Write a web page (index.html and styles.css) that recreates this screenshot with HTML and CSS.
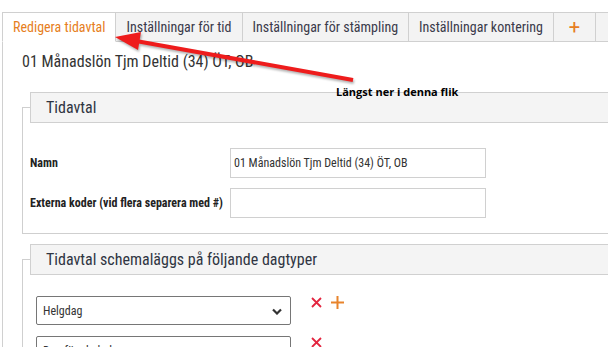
FILE: index.html
```html
<!DOCTYPE html>
<html lang="sv">
<head>
    <meta charset="UTF-8">
    <title>Redigera tidavtal</title>
    <link rel="stylesheet" href="styles.css">
</head>
<body>
    <div class="page">
        <!-- Tab bar -->
        <ul class="tabs">
            <li class="tab active">Redigera tidavtal</li>
            <li class="tab">Inställningar för tid</li>
            <li class="tab">Inställningar för stämpling</li>
            <li class="tab">Inställningar kontering</li>
            <li class="tab tab-add">+</li>
            <li class="tab tab-fill"></li>
        </ul>

        <div class="panel">
            <h1 class="title">01 Månadslön Tjm Deltid (34) ÖT, OB</h1>

            <div class="section">
                <div class="legend">Tidavtal</div>
                <div class="form-row">
                    <label for="name">Namn</label>
                    <input type="text" id="name" value="01 Månadslön Tjm Deltid (34) ÖT, OB">
                </div>
                <div class="form-row">
                    <label for="codes">Externa koder (vid flera separera med #)</label>
                    <input type="text" id="codes">
                </div>
            </div>

            <div class="section">
                <div class="legend">Tidavtal schemaläggs på följande dagtyper</div>
                <div class="day-list">
                    <div class="day-row">
                        <div class="select-wrap">
                            <select>
                                <option>Helgdag</option>
                            </select>
                            <svg class="chevron" width="10" height="7" viewBox="0 0 10 7"><path d="M1 1.5 L5 5.5 L9 1.5" fill="none" stroke="#333" stroke-width="2.2"/></svg>
                        </div>
                        <button class="icon-btn remove"><svg width="11" height="11" viewBox="0 0 11 11"><path d="M1 1 L10 10 M10 1 L1 10" stroke="#e3253f" stroke-width="1.8"/></svg></button>
                        <button class="icon-btn add"><svg width="13" height="13" viewBox="0 0 13 13"><path d="M6.5 0 V13 M0 6.5 H13" stroke="#e8842c" stroke-width="2"/></svg></button>
                    </div>
                    <div class="day-row">
                        <div class="select-wrap">
                            <select>
                                <option>Dag före helgdag</option>
                            </select>
                            <svg class="chevron" width="10" height="7" viewBox="0 0 10 7"><path d="M1 1.5 L5 5.5 L9 1.5" fill="none" stroke="#333" stroke-width="2.2"/></svg>
                        </div>
                        <button class="icon-btn remove"><svg width="11" height="11" viewBox="0 0 11 11"><path d="M1 1 L10 10 M10 1 L1 10" stroke="#e3253f" stroke-width="1.8"/></svg></button>
                    </div>
                </div>
            </div>
        </div>

        <!-- Annotation drawn over the screenshot -->
        <svg class="note-arrow" width="608" height="347" viewBox="0 0 608 347">
            <line x1="353" y1="80" x2="136" y2="41" stroke="#ee1c1c" stroke-width="4"/>
            <polygon points="115,37 141,32 138,50" fill="#ee1c1c"/>
        </svg>
        <div class="note-text">Längst ner i denna flik</div>
    </div>
</body>
</html>
```
FILE: styles.css
```css
body {
    margin: 0;
    font-family: "Roboto Condensed", Roboto, sans-serif;
    color: #333;
    background: #fff;
    overflow: hidden;
}

.page {
    position: relative;
    width: 608px;
    height: 347px;
    padding-top: 12px;
    box-sizing: border-box;
    overflow: hidden;
}

/* Tabs */
.tabs {
    display: flex;
    list-style: none;
    margin: 0 0 0 2px;
    padding: 0;
}

.tab {
    height: 28px;
    line-height: 28px;
    padding: 0 10px;
    font-size: 14px;
    color: #3a3a4a;
    background: #f3f3f3;
    border: 1px solid #d0d0d0;
    border-left: none;
    cursor: pointer;
}

.tab:first-child {
    border-left: 1px solid #d0d0d0;
}

.tab.active {
    background: #fff;
    color: #e67e22;
    border-bottom-color: #fff;
}

.tab-add {
    width: 21px;
    text-align: center;
    color: #e67e22;
    font-size: 20px;
    font-family: Roboto, sans-serif;
}

.tab-fill {
    flex: 1;
    padding: 0;
    border-right: none;
}

/* Panel */
.panel {
    margin-left: 2px;
    padding: 0 0 0 19px;
    border-left: 1px solid #d0d0d0;
    height: 320px;
}

.title {
    margin: 0;
    padding-top: 10px;
    font-size: 16px;
    line-height: 20px;
    font-weight: normal;
    color: #333;
}

.section {
    margin-top: 35px;
    padding: 0 0 15px 7px;
    border: 1px solid #cfcfcf;
    border-right: none;
}

.section + .section {
    margin-top: 25px;
}

.legend {
    margin-top: -16px;
    height: 29px;
    line-height: 29px;
    padding-left: 15px;
    font-size: 16px;
    color: #2f3542;
    background: #f4f4f4;
    border: 1px solid #d0d0d0;
    border-right: none;
}

.form-row {
    display: flex;
    align-items: center;
    margin-top: 10px;
}

.legend + .form-row {
    margin-top: 25px;
}

.form-row label {
    width: 200px;
    font-size: 12px;
    font-weight: bold;
    color: #222;
}

.form-row input {
    box-sizing: border-box;
    width: 256px;
    height: 30px;
    padding: 0 3px;
    border: 1px solid #d0d0d0;
    font-family: "Roboto Condensed", Roboto, sans-serif;
    font-size: 12px;
    color: #333;
}

/* Day types */
.day-list {
    padding: 21px 0 0 6px;
}

.day-row {
    display: flex;
    align-items: flex-start;
    margin-bottom: 11px;
}

.select-wrap {
    position: relative;
    width: 255px;
}

.select-wrap select {
    appearance: none;
    box-sizing: border-box;
    width: 100%;
    height: 29px;
    padding: 0 6px;
    border: 1px solid #767676;
    border-radius: 2px;
    background: #fff;
    font-family: "Roboto Condensed", Roboto, sans-serif;
    font-size: 12px;
    color: #333;
}

.chevron {
    position: absolute;
    right: 9px;
    top: 12px;
}

.icon-btn {
    border: none;
    background: none;
    padding: 0;
    cursor: pointer;
    line-height: 0;
}

.icon-btn.remove {
    margin: 1px 0 0 20px;
}

.icon-btn.add {
    margin-left: 9px;
}

/* Annotation */
.note-arrow {
    position: absolute;
    top: 0;
    left: 0;
    filter: drop-shadow(1px 2px 1px rgba(0, 0, 0, 0.3));
}

.note-text {
    position: absolute;
    left: 336px;
    top: 84px;
    font-family: "Open Sans", sans-serif;
    font-size: 11px;
    font-weight: bold;
    color: #000;
}
```
